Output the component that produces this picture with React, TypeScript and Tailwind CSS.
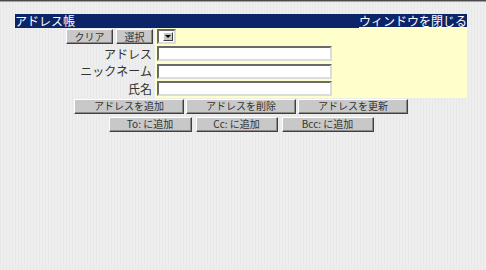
import React from "react";

const font = { fontFamily: '"Noto Sans CJK JP", "Noto Sans", sans-serif' };

function Btn({ children, w }: { children: React.ReactNode; w: string }) {
  return (
    <div
      className={`${w} h-[15px] bg-[#c8c8c8] border border-t-white border-l-white border-r-[#404040] border-b-[#404040] shadow-[inset_-1px_-1px_0_#8a8a8a] flex items-center justify-center text-[10px] leading-none text-[#333]`}
    >
      {children}
    </div>
  );
}

function Field() {
  return (
    <div className="w-[175px] h-[15px] bg-white border-2 border-t-[#6a6a6a] border-l-[#6a6a6a] border-r-[#dcdcdc] border-b-[#dcdcdc]" />
  );
}

export default function App() {
  return (
    <div
      className="w-[486px] h-[270px] bg-[#ebebeb] bg-[repeating-linear-gradient(90deg,#e8e8e8_0px,#e8e8e8_1px,#eeeeee_1px,#eeeeee_3px)] border-t border-t-[#4a4a4a] overflow-hidden"
      style={font}
    >
      <div className="h-px bg-[#a0a0a0]" />
      <div className="w-[452px] ml-[15px] mt-[12px]">
        <div className="h-[14px] bg-[#0c2468] flex items-center justify-between text-white text-[12px] leading-[14px]">
          <span>アドレス帳</span>
          <span className="underline">ウィンドウを閉じる</span>
        </div>
        <div className="grid grid-cols-[140px_312px]">
          <div className="h-[17px] flex items-center justify-end gap-[3px] pr-[2px]">
            <Btn w="w-[47px]">クリア</Btn>
            <Btn w="w-[37px]">選択</Btn>
          </div>
          <div className="h-[17px] bg-[#ffffcc] flex items-center pl-[2px]">
            <div className="w-[19px] h-[15px] bg-white border-2 border-t-[#6a6a6a] border-l-[#6a6a6a] border-r-[#dcdcdc] border-b-[#dcdcdc] flex items-center justify-end pr-[1px]">
              <div className="w-[10px] h-[9px] bg-[#c6c6c6] border border-t-white border-l-white border-r-[#404040] border-b-[#404040] flex items-center justify-center">
                <div className="w-0 h-0 border-l-[3px] border-r-[3px] border-t-[3px] border-l-transparent border-r-transparent border-t-black" />
              </div>
            </div>
          </div>
          {["アドレス", "ニックネーム", "氏名"].map((l) => (
            <React.Fragment key={l}>
              <div className="h-[17.5px] flex items-center justify-end pr-[3px] text-[12px] leading-none text-[#333]">
                {l}
              </div>
              <div className="h-[17.5px] bg-[#ffffcc] flex items-center pl-[2px]">
                <Field />
              </div>
            </React.Fragment>
          ))}
        </div>
        <div className="flex justify-center gap-[2px] mt-[1px]">
          <Btn w="w-[110px]">アドレスを追加</Btn>
          <Btn w="w-[110px]">アドレスを削除</Btn>
          <Btn w="w-[110px]">アドレスを更新</Btn>
        </div>
        <div className="flex justify-center gap-[4px] mt-[3px]">
          <Btn w="w-[83px]">To: に追加</Btn>
          <Btn w="w-[82px]">Cc: に追加</Btn>
          <Btn w="w-[92px]">Bcc: に追加</Btn>
        </div>
      </div>
    </div>
  );
}
